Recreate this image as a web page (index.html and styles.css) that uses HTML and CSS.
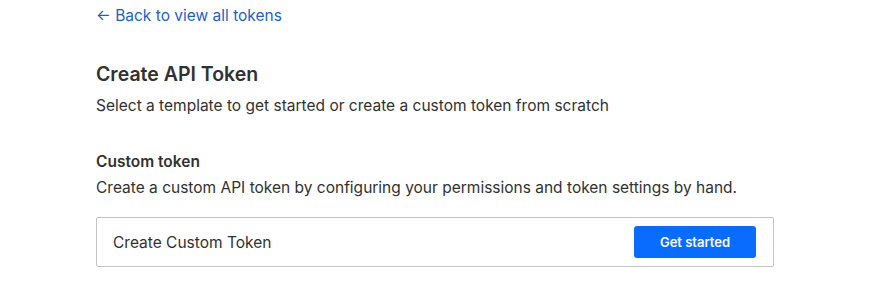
FILE: index.html
```html
<!DOCTYPE html>
<html lang="en">
<head>
    <meta charset="UTF-8">
    <meta name="viewport" content="width=device-width, initial-scale=1.0">
    <title>Create API Token</title>
    <link rel="stylesheet" href="styles.css">
</head>
<body>
    <main class="page">
        <a class="back-link" href="#"><span class="arrow">&larr;</span> Back to view all tokens</a>

        <h2 class="title">Create API Token</h2>
        <p class="subtitle">Select a template to get started or create a custom token from scratch</p>

        <section class="custom">
            <h3 class="section-title">Custom token</h3>
            <p class="section-desc">Create a custom API token by configuring your permissions and token settings by hand.</p>

            <div class="token-row">
                <span class="token-name">Create Custom Token</span>
                <button type="button" class="btn">Get started</button>
            </div>
        </section>
    </main>
</body>
</html>
```

FILE: styles.css
```css
body {
    font-family: Inter, "Noto Sans", Arial, sans-serif;
    margin: 0;
    background: #fff;
    color: #313131;
}

.page {
    width: 678px;
    padding: 5px 0 0 96px;
}

.back-link {
    display: inline-block;
    color: #1f5fc4;
    text-decoration: none;
    font-size: 15.5px;
    line-height: 22px;
}

.title {
    font-size: 19.5px;
    font-weight: 600;
    margin: 33px 0 0;
    line-height: 28px;
}

.subtitle {
    font-size: 15.5px;
    margin: 7px 0 0;
    line-height: 22px;
}

.custom {
    margin-top: 34px;
}

.section-title {
    font-size: 15.5px;
    font-weight: 600;
    margin: 0;
    line-height: 22px;
}

.section-desc {
    font-size: 15.5px;
    margin: 4px 0 0;
    line-height: 22px;
}

.token-row {
    display: flex;
    align-items: center;
    justify-content: space-between;
    margin-top: 18px;
    height: 48px;
    padding: 0 17px 0 16px;
    border: 1px solid #c4c4c4;
    border-radius: 2px;
}

.token-name {
    font-size: 15.5px;
}

.btn {
    width: 122px;
    height: 32px;
    background-color: #0a6cff;
    color: #fff;
    border: none;
    border-radius: 3px;
    font-family: inherit;
    font-size: 13px;
    font-weight: 600;
    cursor: pointer;
}
```
